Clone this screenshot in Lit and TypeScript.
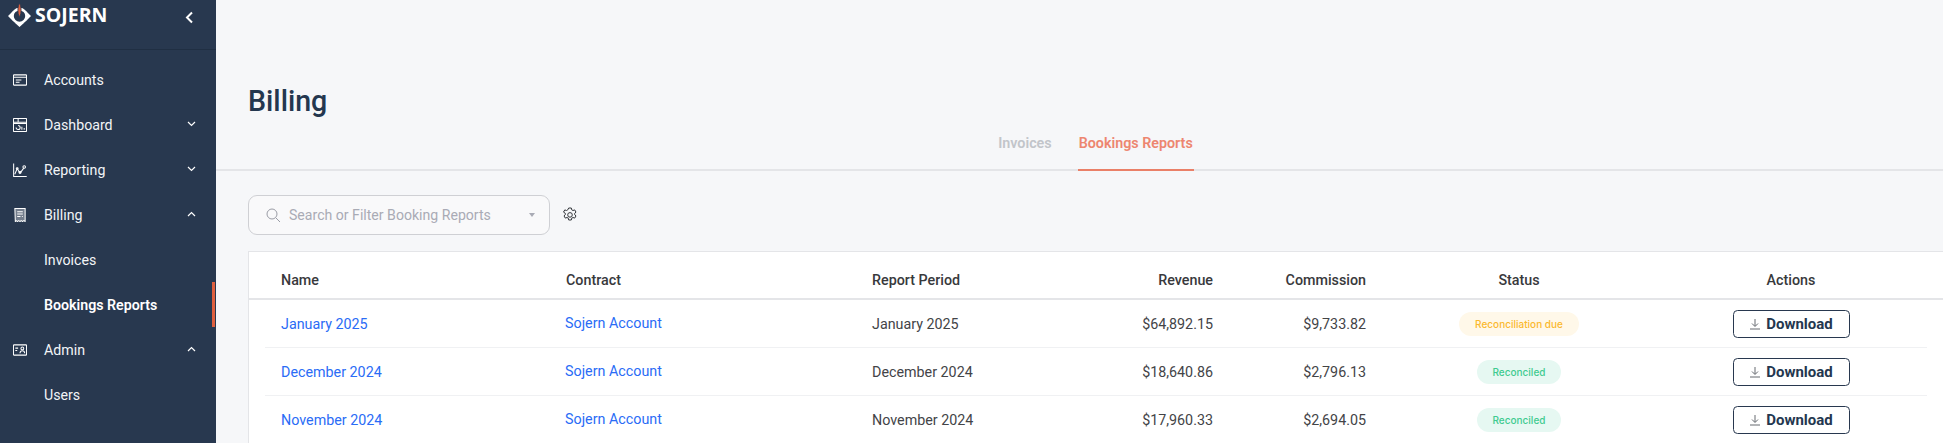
import { LitElement, html, css, svg } from "lit";
import { customElement } from "lit/decorators.js";

const icons: Record<string, unknown> = {
  accounts: svg`<rect x="1" y="2.500" width="14" height="11" rx=".6"/><path d="M1 5h14M3.500 8h6M3.500 10.500h4"/>`,
  dashboard: svg`<rect x="1" y="1" width="14" height="14" rx=".6"/><path d="M1 5h14M6 1v4M1 6.500h14"/><path d="M6 8.500a2.200 2.200 0 1 1-2.200 2.200M10 13v-3M12.500 13v-1.800"/>`,
  reporting: svg`<path d="M1.200 1v14h14"/><path d="M2.400 12.500 5 6.500l3 5 4-5.500"/><circle cx="5" cy="6.500" r="1"/><circle cx="8" cy="10.500" r="1.100"/><circle cx="12.500" cy="4.800" r="1.400"/>`,
  billing: svg`<path d="M2.500 1h11v14l-1.400-1-1.400 1-1.300-1-1.400 1-1.300-1-1.400 1-1.300-1-1 1z" fill="rgba(255,255,255,.35)"/><path d="M5 4.500h6M5 7h6M5 9.500h3.500M10 9.500h1"/>`,
  admin: svg`<rect x="1" y="2.500" width="14" height="11" rx=".6"/><path d="M3 6h3M3 8.500h2"/><circle cx="10.500" cy="6.300" r="1.500"/><path d="M8 11.500c0-2 1-2.800 2.500-2.800s2.500.8 2.500 2.800"/>`,
};

const nav = [
  { label: "Accounts", icon: "accounts" },
  { label: "Dashboard", icon: "dashboard", chev: "down" },
  { label: "Reporting", icon: "reporting", chev: "down" },
  { label: "Billing", icon: "billing", chev: "up" },
  { label: "Invoices", sub: true },
  { label: "Bookings Reports", sub: true, active: true },
  { label: "Admin", icon: "admin", chev: "up" },
  { label: "Users", sub: true },
];

const rows = [
  { name: "January 2025", rev: "$64,892.15", com: "$9,733.82", status: "Reconciliation due", due: true },
  { name: "December 2024", rev: "$18,640.86", com: "$2,796.13", status: "Reconciled", due: false },
  { name: "November 2024", rev: "$17,960.33", com: "$2,694.05", status: "Reconciled", due: false },
];

@customElement("app-root")
export class AppRoot extends LitElement {
  static styles = css`
    :host {
      display: flex;
      height: 100vh;
      overflow: hidden;
      background: #f6f7f9;
      font-family: "Roboto", "Liberation Sans", sans-serif;
      font-size: 14.3px;
      color: #434447;
    }
    .side {
      flex: 0 0 216px;
      width: 216px;
      background: #28384f;
      color: #fff;
    }
    .logo {
      height: 49px;
      border-bottom: 1px solid #202f43;
      display: flex;
      align-items: flex-start;
      padding-left: 8px;
      padding-right: 22px;
    }
    .mark {
      width: 23px;
      height: 24px;
      margin-top: 3px;
      flex: none;
    }
    .word {
      font-family: "Open Sans", sans-serif;
      font-weight: 700;
      font-size: 19.5px;
      line-height: 20px;
      margin: 5px 0 0 4px;
      color: #fff;
    }
    .collapse {
      margin: 11px 0 0 auto;
      width: 9px;
      height: 13px;
    }
    .items {
      padding-top: 7px;
    }
    .item {
      height: 45px;
      display: flex;
      align-items: center;
      padding-left: 13px;
      padding-right: 20px;
      position: relative;
      font-size: 14.2px;
      color: #f2f4f7;
    }
    .item .ic {
      width: 14px;
      height: 14px;
      flex: none;
      margin-right: 17px;
      fill: none;
      stroke: #fff;
      stroke-width: 1.1;
    }
    .item.sub {
      padding-left: 44px;
    }
    .item.active {
      font-weight: 600;
      color: #fff;
    }
    .item.active::after {
      content: "";
      position: absolute;
      right: 1px;
      top: 0;
      bottom: 0;
      width: 3px;
      background: #e0603f;
    }
    .chev {
      margin-left: auto;
      width: 9px;
      height: 6px;
      fill: none;
      stroke: #fff;
      stroke-width: 1.2;
      margin-top: -2px;
    }
    .main {
      flex: 1;
      min-width: 0;
    }
    .head {
      border-bottom: 2px solid #e4e5e8;
      padding-left: 32px;
      display: flex;
      flex-direction: column;
      height: 169px;
    }
    h1 {
      margin: 83px 0 0;
      font-size: 28.6px;
      line-height: 36px;
      font-weight: 500;
      color: #24374f;
    }
    .tabs {
      margin-top: auto;
      display: flex;
      justify-content: center;
      gap: 25px;
      margin-bottom: -2px;
    }
    .tab {
      padding: 0 1px 16px;
      line-height: 20px;
      font-size: 14.3px;
      font-weight: 600;
      color: #c2c5ca;
      border-bottom: 2px solid transparent;
    }
    .tab.on {
      color: #ed8670;
      border-bottom-color: #ea8068;
    }
    .content {
      padding: 24px 0 0 32px;
    }
    .filter {
      display: flex;
      align-items: center;
      gap: 12px;
      margin-bottom: 16px;
    }
    .search {
      width: 302px;
      height: 40px;
      box-sizing: border-box;
      border: 1px solid #cfd0d4;
      border-radius: 9px;
      background: #f9f9fa;
      display: flex;
      align-items: center;
      padding: 0 14px 0 17px;
      color: #a9abb5;
      font-size: 14.1px;
    }
    .search svg {
      width: 15px;
      height: 15px;
      fill: none;
      stroke: #9a9ca5;
      stroke-width: 1;
      margin-right: 8px;
      flex: none;
    }
    .caret {
      margin-left: auto;
      width: 0;
      height: 0;
      border-left: 3.5px solid transparent;
      border-right: 3.5px solid transparent;
      border-top: 4px solid #a9abb5;
    }
    .gear {
      width: 16px;
      height: 16px;
      fill: none;
      stroke: #33363b;
      stroke-width: 1;
    }
    .card {
      background: #fff;
      border: 1px solid #e4e5e8;
      border-width: 1px 0 0 1px;
    }
    .grid {
      display: grid;
      grid-template-columns: 285px 306px 190px 151px 153px 306px 238px;
      align-items: center;
    }
    .thead {
      height: 37px;
      padding: 9px 0 0 32px;
      border-bottom: 2px solid #e4e5e8;
      font-weight: 500;
      color: #38393c;
    }
    .r {
      text-align: right;
    }
    .c {
      text-align: center;
    }
    .row {
      height: 48px;
      margin-left: 16px;
      width: 1662px;
      padding-left: 16px;
      box-sizing: border-box;
      border-bottom: 1px solid #f0f1f3;
    }
    a {
      color: #2a6cf6;
      text-decoration: none;
    }
    .contract {
      margin-top: -2px;
      margin-left: -1px;
    }
    .pill {
      display: inline-block;
      height: 24px;
      line-height: 24px;
      border-radius: 12px;
      font-family: "Inter", sans-serif;
      font-size: 10px;
      font-weight: 500;
      padding: 0 16px;
    }
    .pill.due {
      background: #fff8e9;
      color: #fbb92f;
    }
    .pill.ok {
      background: #e6f8f2;
      color: #3ecb90;
    }
    .btn {
      display: flex;
      align-items: center;
      justify-content: center;
      margin: 0 auto;
      width: 117px;
      height: 28px;
      box-sizing: border-box;
      border: 1px solid #28384f;
      border-radius: 4.5px;
      background: #fff;
      font-weight: 700;
      font-size: 15px;
      color: #24374f;
      gap: 5px;
    }
    .btn svg {
      width: 12px;
      height: 12px;
      fill: none;
      stroke: #666a70;
      stroke-width: 1;
      flex: none;
    }
  `;

  render() {
    return html`
      <aside class="side">
        <div class="logo">
          <svg class="mark" viewBox="0 0 23 24">
            <circle cx="11.5" cy="13" r="7" fill="none" stroke="#fff" stroke-width="2.6" />
            <path fill="#fff" d="M0 13 5 8v10zM23 13l-5-5v10zM11.500 24l-5-4.500h10zM8 8.500l3.500-3.500 3.500 3.500-3.500-1z" />
            <path fill="#e0603f" stroke="#28384f" stroke-width=".8" d="M11.500 0c1.500 3 2 6.500 1.300 10.500l-1.300 4-1.300-4c-.7-4-.2-7.500 1.300-10.500z" />
          </svg>
          <span class="word">SOJERN</span>
          <svg class="collapse" viewBox="0 0 9 13" fill="none" stroke="#fff" stroke-width="2"><path d="M7 1.500 2 6.500l5 5" /></svg>
        </div>
        <div class="items">
          ${nav.map(
            (n) => html`<div class="item ${n.sub ? "sub" : ""} ${n.active ? "active" : ""}">
              ${n.icon ? html`<svg class="ic" viewBox="0.5 0.5 15 15">${icons[n.icon]}</svg>` : ""}
              <span>${n.label}</span>
              ${n.chev
                ? html`<svg class="chev" viewBox="0 0 9 6"><path d=${n.chev === "down" ? "M1 1l3.500 3.500L8 1" : "M1 5l3.500-3.500L8 5"} /></svg>`
                : ""}
            </div>`
          )}
        </div>
      </aside>
      <div class="main">
        <header class="head">
          <h1>Billing</h1>
          <div class="tabs">
            <div class="tab">Invoices</div>
            <div class="tab on">Bookings Reports</div>
          </div>
        </header>
        <section class="content">
          <div class="filter">
            <div class="search">
              <svg viewBox="0 0 15 15"><circle cx="6" cy="6" r="5" /><path d="M9.800 9.800 14 14" /></svg>
              <span>Search or Filter Booking Reports</span>
              <i class="caret"></i>
            </div>
            <svg class="gear" viewBox="0 0 16 16">
              <path d="M6.700 1h2.600l.4 1.800 1.300.7 1.700-.6 1.300 2.200-1.300 1.200v1.400l1.300 1.200-1.300 2.200-1.700-.6-1.300.7-.4 1.800H6.700l-.4-1.800-1.300-.7-1.700.6-1.300-2.200 1.300-1.200V6.300L1.500 5.100l1.300-2.200 1.700.6 1.300-.7z" />
              <circle cx="8" cy="7.900" r="2.300" />
            </svg>
          </div>
          <div class="card">
            <div class="grid thead">
              <div>Name</div>
              <div>Contract</div>
              <div>Report Period</div>
              <div class="r">Revenue</div>
              <div class="r">Commission</div>
              <div class="c">Status</div>
              <div class="c">Actions</div>
            </div>
            ${rows.map(
              (r) => html`<div class="grid row">
                <div><a href="#">${r.name}</a></div>
                <div class="contract"><a href="#">Sojern Account</a></div>
                <div>${r.name}</div>
                <div class="r">${r.rev}</div>
                <div class="r">${r.com}</div>
                <div class="c"><span class="pill ${r.due ? "due" : "ok"}">${r.status}</span></div>
                <div>
                  <div class="btn">
                    <svg viewBox="0 0 12 12"><path d="M6 1v7M3 5.500 6 8.500l3-3M1 11h10" /></svg>
                    <span>Download</span>
                  </div>
                </div>
              </div>`
            )}
          </div>
        </section>
      </div>
    `;
  }
}
